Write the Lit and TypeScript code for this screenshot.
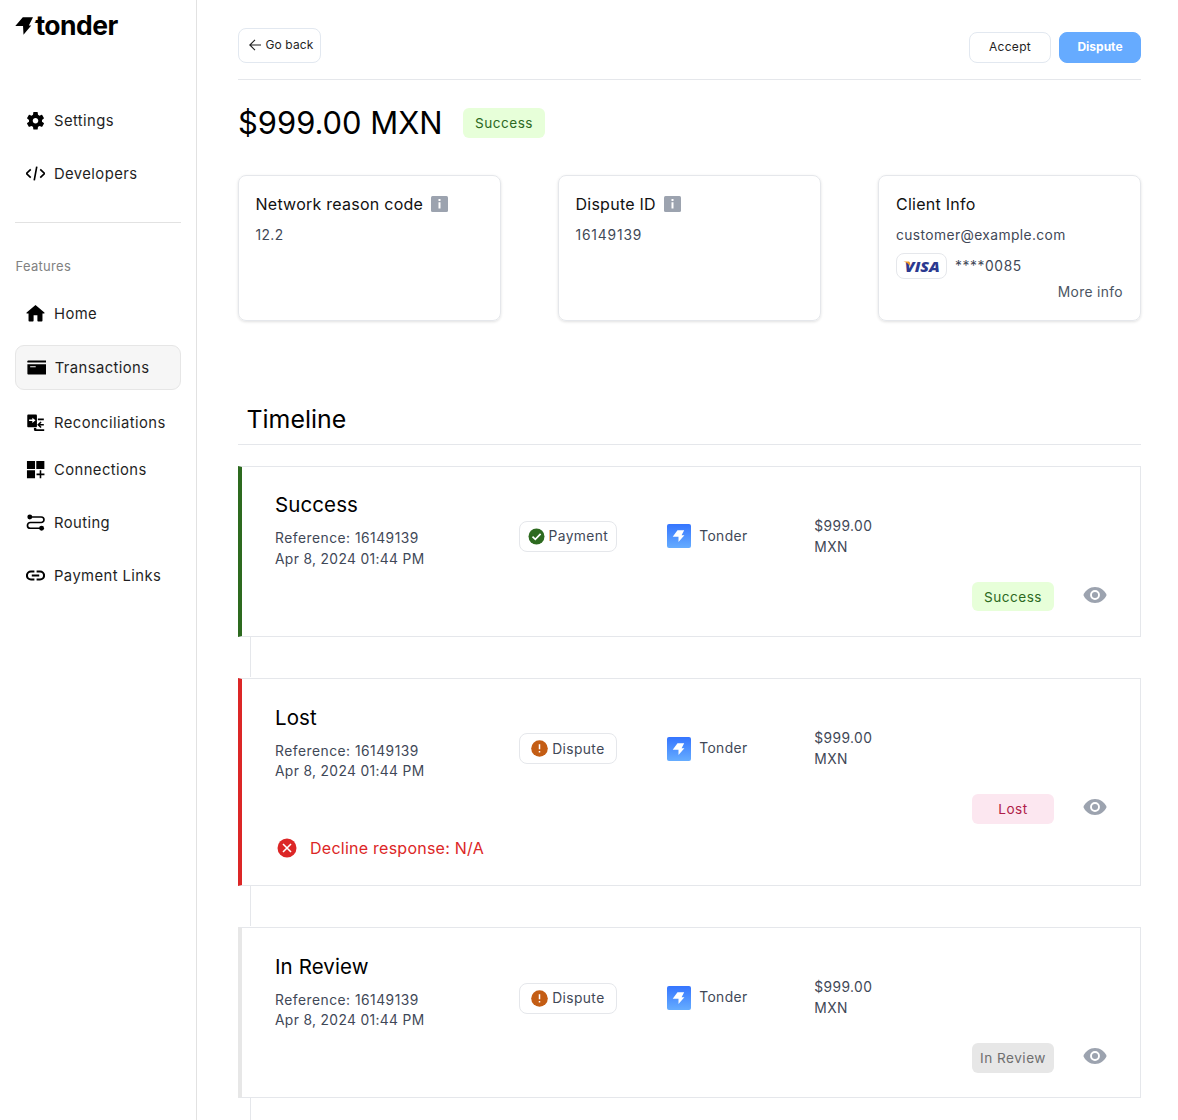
import { LitElement, html, css, svg, nothing } from "lit";
import { customElement, property } from "lit/decorators.js";
import { classMap } from "lit/directives/class-map.js";

const navIcons: Record<string, unknown> = {
  settings: svg`<path fill-rule="evenodd" transform="translate(-1.2 -0.8) scale(1.1)" d="M19.43 12.98c.04-.32.07-.64.07-.98s-.03-.66-.07-.98l2.11-1.65c.19-.15.24-.42.12-.64l-2-3.46c-.12-.22-.39-.3-.61-.22l-2.49 1c-.52-.4-1.08-.73-1.69-.98l-.38-2.65C14.46 2.18 14.25 2 14 2h-4c-.25 0-.46.18-.49.42l-.38 2.65c-.61.25-1.17.59-1.69.98l-2.49-1c-.23-.09-.49 0-.61.22l-2 3.46c-.13.22-.07.49.12.64l2.11 1.65c-.04.32-.07.65-.07.98s.03.66.07.98l-2.11 1.65c-.19.15-.24.42-.12.64l2 3.46c.12.22.39.3.61.22l2.49-1c.52.4 1.08.73 1.69.98l.38 2.65c.03.24.24.42.49.42h4c.25 0 .46-.18.49-.42l.38-2.65c.61-.25 1.17-.59 1.69-.98l2.49 1c.23.09.49 0 .61-.22l2-3.46c.12-.22.07-.49-.12-.64l-2.11-1.65zM12 15.2c-1.77 0-3.2-1.43-3.2-3.2s1.43-3.2 3.2-3.2 3.2 1.43 3.2 3.2-1.43 3.2-3.2 3.2z"/>`,
  code: svg`<path fill="none" stroke="currentColor" stroke-width="2.1" d="M6 6.800 .6 12 6 17.200M18 6.800l5.400 5.200-5.400 5.200M13.600 3.400l-3.200 17.200"/>`,
  home: svg`<path d="M12 1.200.8 10.600c-.5.5-.2 1.400.5 1.400h1.900v9.200c0 .6.4 1 1 1h4.500c.5 0 .9-.4.9-.9v-7h4.800v7c0 .5.4.9.9.9h4.500c.6 0 1-.4 1-1V12h1.900c.7 0 1-.9.5-1.400z"/>`,
  card: svg`<path d="M1.500 3.100h22c.6 0 1 .4 1 1v1.700h-24V4.100c0-.6.4-1 1-1z"/><path fill-rule="evenodd" d="M.5 7.900h24v12c0 .6-.4 1-1 1h-22c-.6 0-1-.4-1-1zM4 10.400v1.200h7v-1.200z"/>`,
  recon: svg`<path fill-rule="evenodd" d="M3 2h9.400c.8 0 1.400.6 1.400 1.400v13.200c0 .8-.6 1.400-1.400 1.400H3c-.8 0-1.400-.6-1.400-1.400V3.400C1.600 2.600 2.200 2 3 2zm.9 6.200v2H8v2.300l4-3.300-4-3.300v2.300z"/><path d="M15 7h7.500v2.200H15zM12 20.600h11v2H12zM10 19h3v3.600h-1.600c-.8 0-1.400-.6-1.400-1.400zM20 7h2.500v2.200z"/><path fill="none" stroke="currentColor" stroke-width="2" d="M22.500 14.800h-6M19 11.300l-3.500 3.500 3.500 3.500"/>`,
  blocks: svg`<path d="M1.200 1.200h10.200v10.200H1.200zM13 1.200h10.200v10.200H13zM1.200 13h10.200v10.200H1.200zM17.300 13h2v4.200h4v2h-4v4h-2v-4h-4v-2h4z"/>`,
  route: svg`<circle cx="4.800" cy="5" r="3.100"/><circle cx="19.700" cy="19.300" r="3.100"/><path fill="none" stroke="currentColor" stroke-width="2.100" d="M5 5h14.200a3.500 3.500 0 0 1 0 7H5.500a3.600 3.600 0 0 0 0 7.300h14"/>`,
  link: svg`<path fill="none" stroke="currentColor" stroke-width="2.600" d="M10.600 6.900H6.300a5.100 5.100 0 0 0 0 10.200h4.300M13.400 6.900h4.300a5.100 5.100 0 0 1 0 10.200h-4.300M7.300 12h9.400"/>`,
};

interface NavEntry {
  icon: string;
  label: string;
  active?: boolean;
  tight?: boolean;
}

const accountNav: NavEntry[] = [
  { icon: "settings", label: "Settings" },
  { icon: "code", label: "Developers" },
];

const featureNav: NavEntry[] = [
  { icon: "home", label: "Home" },
  { icon: "card", label: "Transactions", active: true },
  { icon: "recon", label: "Reconciliations", tight: true },
  { icon: "blocks", label: "Connections" },
  { icon: "route", label: "Routing" },
  { icon: "link", label: "Payment Links" },
];

interface TimelineEvent {
  status: string;
  tone: "success" | "lost" | "review";
  kind: "Payment" | "Dispute";
  decline?: string;
}

const events: TimelineEvent[] = [
  { status: "Success", tone: "success", kind: "Payment" },
  { status: "Lost", tone: "lost", kind: "Dispute", decline: "Decline response: N/A" },
  { status: "In Review", tone: "review", kind: "Dispute" },
];

@customElement("status-badge")
export class StatusBadge extends LitElement {
  @property() tone = "success";
  @property() label = "";

  static styles = css`
    :host {
      display: block;
      height: 30px;
    }
    .badge {
      box-sizing: border-box;
      width: 82px;
      height: 100%;
      border-radius: 6px;
      display: flex;
      align-items: center;
      justify-content: center;
      padding-bottom: 1px;
      white-space: nowrap;
      font-size: 13.600px;
      letter-spacing: 0.5px;
    }
    :host([compact]) .badge {
      padding-bottom: 0.300px;
    }
    .success {
      background: #e7ffd9;
      color: #2d6a1f;
    }
    .lost {
      background: #fce7f0;
      color: #b01c48;
    }
    .review {
      background: #e7e7e7;
      color: #6f6f6f;
    }
  `;

  render() {
    return html`<div class="badge ${this.tone}">${this.label}</div>`;
  }
}

@customElement("side-bar")
export class SideBar extends LitElement {
  static styles = css`
    :host {
      display: block;
      box-sizing: border-box;
      width: 197px;
      flex: none;
      height: 1120px;
      border-right: 1px solid #e2e2e2;
      padding: 0 15px;
      color: #1f1f1f;
    }
    .logo {
      display: block;
      width: 106px;
      height: 50px;
      margin-bottom: 48px;
    }
    .logo-text {
      font-family: Inter, sans-serif;
      font-weight: 700;
      font-size: 26.500px;
    }
    .group {
      display: flex;
      flex-direction: column;
      gap: 8px;
    }
    .item {
      box-sizing: border-box;
      height: 45px;
      border: 1px solid transparent;
      border-radius: 9px;
      display: flex;
      align-items: center;
      gap: 9px;
      padding-left: 10px;
      font-size: 14.800px;
      letter-spacing: 0.42px;
      white-space: nowrap;
    }
    .item.active {
      padding-left: 11px;
      margin: 1px 0 2px;
      background: #f6f6f6;
      border-color: #e6e6e6;
    }
    .item.tight {
      margin-bottom: -6px;
    }
    .icon {
      width: 19px;
      height: 19px;
      flex: none;
      margin: 0 -0.500px;
      fill: currentColor;
      color: #000;
    }
    .item span {
      padding-left: 1px;
    }
    .item.active span {
      padding-left: 0.700px;
    }
    .rule {
      height: 1px;
      background: #e2e2e2;
      margin: 26px 0 33px;
    }
    .heading {
      height: 20px;
      line-height: 20px;
      padding-left: 0.500px;
      font-size: 13px;
      letter-spacing: 0.3px;
      color: #818181;
      margin-bottom: 15px;
    }
  `;

  private item(n: NavEntry) {
    return html`<div class=${classMap({ item: true, active: !!n.active, tight: !!n.tight })}>
      <svg class="icon" viewBox="0 0 24 24">${navIcons[n.icon]}</svg>
      <span>${n.label}</span>
    </div>`;
  }

  render() {
    return html`
      <svg class="logo" viewBox="0 0 106 50">
        <path d="M7.800 17.200H18L13.600 25.900H0.300zM8 25.500H16.200L8.500 34.700z" />
        <path d="M19.300 22.700 25.800 17.200V22.700z" />
        <text class="logo-text" x="20.400" y="34.700" textLength="83">tonder</text>
      </svg>
      <nav class="group">${accountNav.map((n) => this.item(n))}</nav>
      <div class="rule"></div>
      <div class="heading">Features</div>
      <nav class="group">${featureNav.map((n) => this.item(n))}</nav>
    `;
  }
}

@customElement("timeline-event")
export class TimelineEventCard extends LitElement {
  @property({ attribute: false }) event!: TimelineEvent;

  static styles = css`
    :host {
      display: block;
    }
    .card {
      box-sizing: border-box;
      height: 171px;
      border: 1px solid #e5e7eb;
      border-left-width: 4px;
      padding: 23.100px 33px 0;
      font-size: 13.800px;
      letter-spacing: 0.4px;
      color: #3f4857;
    }
    .card.success {
      border-left-color: #2d6a1f;
    }
    .card.lost {
      border-left-color: #dc2626;
      height: 207.600px;
    }
    .card.review {
      border-left-color: #e7e7e7;
    }
    .columns {
      display: grid;
      grid-template-columns: 244px 148px 147px 1fr;
      height: 91.900px;
    }
    .title {
      font-size: 20.500px;
      letter-spacing: 0.1px;
      line-height: 30px;
      height: 30px;
      color: #000;
      margin-bottom: 8px;
    }
    .line {
      line-height: 20.800px;
    }
    .line.reference {
      letter-spacing: 0.5px;
      margin-bottom: -0.100px;
    }
    .line.date {
      letter-spacing: 0.35px;
    }
    .pill {
      box-sizing: border-box;
      margin-top: 30.940px;
      width: 98px;
      height: 31px;
      border: 1px solid #e5e7eb;
      border-radius: 8px;
      display: flex;
      align-items: center;
      justify-content: center;
      gap: 4px;
    }
    .pill span {
      padding-bottom: 0.800px;
    }
    .pill-icon {
      width: 17px;
      height: 17px;
      flex: none;
      margin-left: -0.200px;
    }
    .provider {
      margin-top: 33.600px;
      height: 25px;
      display: flex;
      align-items: center;
      gap: 8.500px;
    }
    .provider span {
      padding-bottom: 0.600px;
    }
    .provider-icon {
      width: 24px;
      height: 24px;
      margin-left: -0.300px;
    }
    .amount {
      margin-top: 25.900px;
      padding-left: 0.300px;
      width: 70px;
    }
    .actions {
      display: flex;
      justify-content: flex-end;
      align-items: center;
      gap: 29px;
      height: 29.400px;
    }
    .actions status-badge {
      height: 29.400px;
    }
    .eye {
      width: 24px;
      height: 24px;
      margin-top: -3.800px;
    }
    .decline {
      display: flex;
      align-items: center;
      gap: 13px;
      height: 24px;
      margin: 12.600px 0 0 2px;
      font-size: 16px;
      letter-spacing: 0.25px;
      color: #dc2626;
    }
    .decline-icon {
      width: 20px;
      height: 20px;
    }
  `;

  private kindIcon() {
    return this.event.kind === "Payment"
      ? html`<svg class="pill-icon" viewBox="0 0 17 17">
          <circle cx="8.500" cy="8.500" r="8" fill="#2d6a1f" />
          <path d="M4.500 8.700 7.300 11.400 12.600 5.900" fill="none" stroke="#fff" stroke-width="1.700" />
        </svg>`
      : html`<svg class="pill-icon" viewBox="0 0 17 17">
          <circle cx="8.500" cy="8.500" r="8.300" fill="#c45d14" />
          <path d="M8.500 4.300v5M8.500 10.900v1.700" stroke="#fff" stroke-width="1.500" />
        </svg>`;
  }

  render() {
    const e = this.event;
    return html`<article class="card ${e.tone}">
      <div class="columns">
        <div>
          <div class="title">${e.status}</div>
          <div class="line reference">Reference: 16149139</div>
          <div class="line date">Apr 8, 2024 01:44 PM</div>
        </div>
        <div class="pill">${this.kindIcon()}<span>${e.kind}</span></div>
        <div class="provider">
          <svg class="provider-icon" viewBox="0 0 24 24">
            <defs>
              <linearGradient id="g" x1="0" y1="0" x2="0" y2="1">
                <stop offset="0" stop-color="#3575ff" />
                <stop offset="1" stop-color="#66adff" />
              </linearGradient>
            </defs>
            <rect width="24" height="24" rx="2" fill="url(#g)" />
            <path d="M10.500 6.300H17.200L14.600 11.300H17.400L11.500 18V12.700H5.700z" fill="#fff" />
          </svg>
          <span>Tonder</span>
        </div>
        <div class="amount">
          <div class="line">$999.00</div>
          <div class="line">MXN</div>
        </div>
      </div>
      <div class="actions">
        <status-badge compact tone=${e.tone} label=${e.status}></status-badge>
        <svg class="eye" viewBox="0 0 24 24">
          <path fill="#9ca3af" d="M12 4C6.800 4 2.300 7.300.4 12c1.900 4.700 6.400 8 11.600 8s9.700-3.300 11.600-8C21.700 7.300 17.200 4 12 4z" />
          <circle cx="12" cy="12" r="4" fill="#9ca3af" stroke="#fff" stroke-width="1.900" />
        </svg>
      </div>
      ${e.decline
        ? html`<div class="decline">
            <svg class="decline-icon" viewBox="0 0 20 20">
              <circle cx="10" cy="10" r="9.500" fill="#dc2626" />
              <path d="M6 6l8 8M14 6l-8 8" stroke="#fff" stroke-width="1.600" />
            </svg>
            <span>${e.decline}</span>
          </div>`
        : nothing}
    </article>`;
  }
}

@customElement("app-root")
export class AppRoot extends LitElement {
  static styles = css`
    :host {
      display: flex;
      width: 1178px;
      height: 1120px;
      overflow: hidden;
      background: #fff;
      font-family: Inter, "Liberation Sans", sans-serif;
      color: #000;
    }
    .main {
      box-sizing: border-box;
      flex: 1;
      min-width: 0;
      padding: 28px 37px 0 41px;
    }
    .toolbar {
      box-sizing: border-box;
      height: 52px;
      border-bottom: 1px solid #e5e7eb;
      display: flex;
      align-items: flex-start;
      gap: 8px;
    }
    .btn {
      box-sizing: border-box;
      width: 82px;
      height: 31px;
      margin-top: 4px;
      border: 1px solid #e2e8f0;
      border-radius: 8px;
      display: flex;
      align-items: center;
      justify-content: center;
      font-size: 12px;
      letter-spacing: 0.3px;
      color: #1f1f1f;
      padding-bottom: 2px;
    }
    .btn.back {
      width: 83px;
      height: 35px;
      margin: 0 auto 0 0;
      gap: 4px;
      padding-left: 4px;
      letter-spacing: 0.15px;
    }
    .btn.primary {
      background: #66abff;
      border-color: #66abff;
      color: #fff;
      font-weight: 700;
      letter-spacing: 0;
    }
    .arrow {
      width: 12px;
      height: 12px;
      fill: none;
      stroke: #1f1f1f;
      stroke-width: 1.100;
    }
    .summary {
      display: flex;
      align-items: center;
      height: 38px;
      margin: 24px 0 33px;
    }
    .total {
      margin: 0;
      width: 225px;
      padding-bottom: 2px;
      font-size: 30.900px;
      font-weight: 400;
      white-space: nowrap;
    }
    .cards {
      display: grid;
      grid-template-columns: repeat(3, 263px);
      gap: 57px;
    }
    .card {
      box-sizing: border-box;
      height: 146px;
      border: 1px solid #e5e7eb;
      border-radius: 8px;
      box-shadow: 0 1px 3px rgba(0, 0, 0, 0.12);
      padding: 16px 17px 16px 16.500px;
      font-size: 13.800px;
      letter-spacing: 0.4px;
      color: #3f4857;
    }
    .card.client {
      padding-left: 17px;
    }
    .card-title {
      display: flex;
      align-items: center;
      gap: 8px;
      height: 24px;
      font-size: 16px;
      letter-spacing: 0.250px;
      color: #111;
      margin-bottom: 8px;
    }
    .info {
      width: 17px;
      height: 16px;
    }
    .value {
      height: 22px;
      line-height: 22px;
    }
    .value.wide {
      letter-spacing: 0.850px;
    }
    .method {
      display: flex;
      align-items: center;
      gap: 8px;
      height: 26px;
      margin-top: 7px;
    }
    .method span {
      padding-bottom: 1px;
      letter-spacing: 0.600px;
    }
    .brand {
      box-sizing: border-box;
      width: 51px;
      height: 26px;
      border: 1px solid #e5e7eb;
      border-radius: 8px;
    }
    .visa {
      display: block;
      width: 49px;
      height: 24px;
    }
    .visa-text {
      font-family: "Open Sans", sans-serif;
      font-weight: 800;
      font-style: italic;
      font-size: 14.500px;
      letter-spacing: 0;
      fill: #2b3990;
    }
    .more {
      text-align: right;
      line-height: 22px;
      margin-top: 2px;
      letter-spacing: 0.350px;
      color: #4b5563;
    }
    .section {
      box-sizing: border-box;
      height: 52px;
      margin: 72px 0 21px;
      padding: 8px 0 0 8.500px;
      border-bottom: 1px solid #e5e7eb;
      font-size: 24.900px;
      font-weight: 400;
      line-height: 36px;
    }
    .connector {
      height: 40px;
      margin: 0 0 1.440px 12px;
      border-left: 1px solid #e5e7eb;
    }
  `;

  private info() {
    return html`<svg class="info" viewBox="0 0 17 16">
      <rect width="17" height="16" rx="1.500" fill="#9ca3af" />
      <path d="M8.500 6.200v6.300M8.500 3v2" stroke="#fff" stroke-width="2" />
    </svg>`;
  }

  render() {
    return html`
      <side-bar></side-bar>
      <main class="main">
        <div class="toolbar">
          <div class="btn back">
            <svg class="arrow" viewBox="0 0 12 12"><path d="M12 6H1M6 .8.800 6 6 11.200" /></svg>
            <span>Go back</span>
          </div>
          <div class="btn">Accept</div>
          <div class="btn primary">Dispute</div>
        </div>
        <div class="summary">
          <h1 class="total">$999.00 MXN</h1>
          <status-badge tone="success" label="Success"></status-badge>
        </div>
        <section class="cards">
          <div class="card">
            <div class="card-title"><span>Network reason code</span>${this.info()}</div>
            <div class="value">12.2</div>
          </div>
          <div class="card">
            <div class="card-title"><span>Dispute ID</span>${this.info()}</div>
            <div class="value wide">16149139</div>
          </div>
          <div class="card client">
            <div class="card-title"><span>Client Info</span></div>
            <div class="value">customer@example.com</div>
            <div class="method">
              <div class="brand">
                <svg class="visa" viewBox="0 0 49 24">
                  <text class="visa-text" x="7.800" y="18.200" textLength="35" lengthAdjust="spacingAndGlyphs">VISA</text>
                  <path d="M6.300 7.400H11.200C12.200 7.400 12.700 7.900 12.900 8.800L13.600 12.800C12.300 10.300 9.800 8.300 6.300 7.400z" fill="#f59a23" />
                </svg>
              </div>
              <span>****0085</span>
            </div>
            <div class="more">More info</div>
          </div>
        </section>
        <h2 class="section">Timeline</h2>
        ${events.map(
          (e) => html`<timeline-event .event=${e}></timeline-event>
            <div class="connector"></div>`
        )}
      </main>
    `;
  }
}
